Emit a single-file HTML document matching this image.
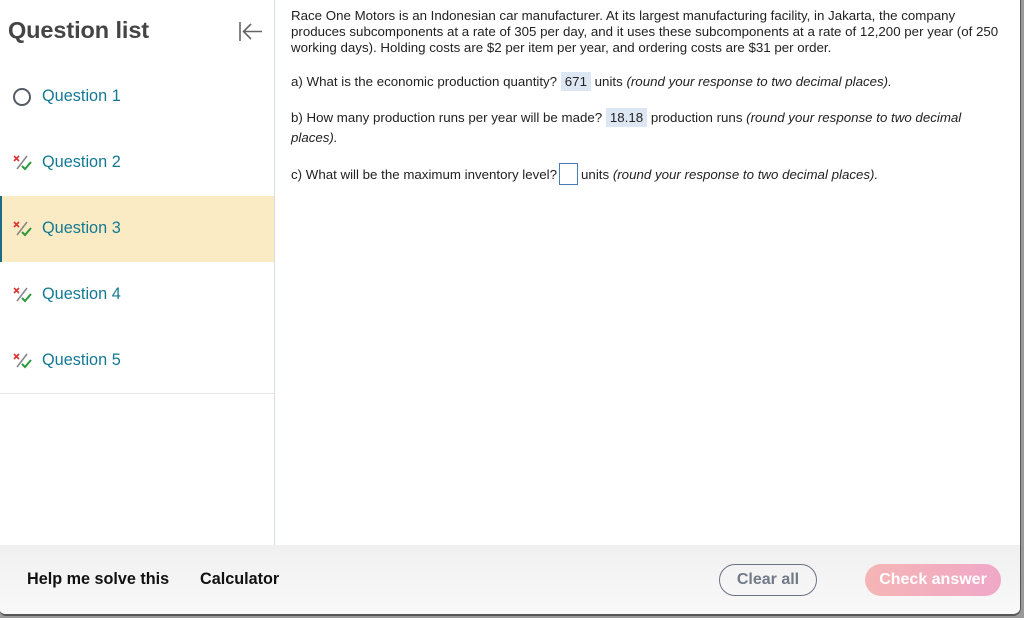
<!DOCTYPE html>
<html><head><style>
*{margin:0;padding:0;box-sizing:border-box}
body{width:1024px;height:618px;background:#9a9a9a;font-family:"Liberation Sans",Arial,sans-serif;position:relative;overflow:hidden}
#win{position:absolute;left:0;top:0;width:1021px;height:616px;background:#fff;border-right:1px solid #555;border-bottom:2px solid #555;border-bottom-right-radius:8px;border-bottom-left-radius:6px;overflow:hidden}
#side{position:absolute;left:0;top:0;width:275px;height:545px;border-right:1px solid #d8dde3}
h1{position:absolute;left:8px;top:17px;font-size:23.5px;font-weight:bold;color:#444;letter-spacing:-0.1px}
.row{position:absolute;left:0;width:274px;height:66px;font-size:16.3px;color:#137993}
.row span{position:absolute;left:42px;top:23px}
.row svg{position:absolute;left:12px;top:23px}
.sel{background:#faebc4;border-left:2px solid #1b6b86}
p{position:absolute;left:291px;font-size:13.3px;color:#222;line-height:16px;width:716px}
.ans{background:#dde7f3;padding:2px 4px}
.box{display:inline-block;width:19px;height:22px;border:1px solid #4a7ab8;vertical-align:-6px;margin:0 3px 0 2px}
i{font-style:italic}
#foot{position:absolute;left:0;top:545px;width:1021px;height:71px;background:linear-gradient(#f0f0f0,#f9f9f9)}
.fb{position:absolute;top:25px;font-size:16.2px;font-weight:bold;color:#111}
.btn{position:absolute;top:19px;height:32px;border-radius:16px;font-size:16px;font-weight:bold;text-align:center;line-height:30px}
</style></head><body>
<div id="win">
<div id="side">
<h1>Question list</h1>
<svg style="position:absolute;left:238px;top:21px" width="26" height="22" viewBox="0 0 26 22"><path d="M2 1V20M24 10.5H6M13 3L5.5 10.5 13 18" fill="none" stroke="#666" stroke-width="1.6"/></svg>
<div class="row" style="top:64px"><svg width="20" height="20"><circle cx="10" cy="10" r="8" fill="none" stroke="#555c66" stroke-width="2"/></svg><span>Question 1</span></div>
<div class="row" style="top:130px"><svg width="22" height="20"><path d="M2 3l5 5M7 3l-5 5" stroke="#d33" stroke-width="1.6"/><path d="M15 3L5 16" stroke="#888" stroke-width="1.6"/><path d="M10 13l3 3 6-7" fill="none" stroke="#2a9a3a" stroke-width="2"/></svg><span>Question 2</span></div>
<div class="row sel" style="top:196px"><svg width="22" height="20" style="left:10px"><path d="M2 3l5 5M7 3l-5 5" stroke="#d33" stroke-width="1.6"/><path d="M15 3L5 16" stroke="#888" stroke-width="1.6"/><path d="M10 13l3 3 6-7" fill="none" stroke="#2a9a3a" stroke-width="2"/></svg><span style="left:40px">Question 3</span></div>
<div class="row" style="top:262px"><svg width="22" height="20"><path d="M2 3l5 5M7 3l-5 5" stroke="#d33" stroke-width="1.6"/><path d="M15 3L5 16" stroke="#888" stroke-width="1.6"/><path d="M10 13l3 3 6-7" fill="none" stroke="#2a9a3a" stroke-width="2"/></svg><span>Question 4</span></div>
<div class="row" style="top:328px;border-bottom:1px solid #e3e6ea"><svg width="22" height="20"><path d="M2 3l5 5M7 3l-5 5" stroke="#d33" stroke-width="1.6"/><path d="M15 3L5 16" stroke="#888" stroke-width="1.6"/><path d="M10 13l3 3 6-7" fill="none" stroke="#2a9a3a" stroke-width="2"/></svg><span>Question 5</span></div>
</div>
<p style="top:8px">Race One Motors is an Indonesian car manufacturer. At its largest manufacturing facility, in Jakarta, the company produces subcomponents at a rate of 305 per day, and it uses these subcomponents at a rate of 12,200 per year (of 250 working days). Holding costs are $2 per item per year, and ordering costs are $31 per order.</p>
<p style="top:74px">a) What is the economic production quantity? <span class="ans">671</span> units <i>(round your response to two decimal places).</i></p>
<p style="top:108px;line-height:20px">b) How many production runs per year will be made? <span class="ans">18.18</span> production runs <i>(round your response to two decimal places).</i></p>
<p style="top:163px">c) What will be the maximum inventory level?<span class="box"></span>units <i>(round your response to two decimal places).</i></p>
<div id="foot">
<div class="fb" style="left:27px">Help me solve this</div>
<div class="fb" style="left:200px">Calculator</div>
<div class="btn" style="left:719px;width:98px;border:1.5px solid #6b7383;color:#727a88">Clear all</div>
<div class="btn" style="left:865px;width:136px;background:linear-gradient(90deg,#f5b5b5,#f0a8c8);color:#fff;line-height:32px">Check answer</div>
</div>
</div>
</body></html>
